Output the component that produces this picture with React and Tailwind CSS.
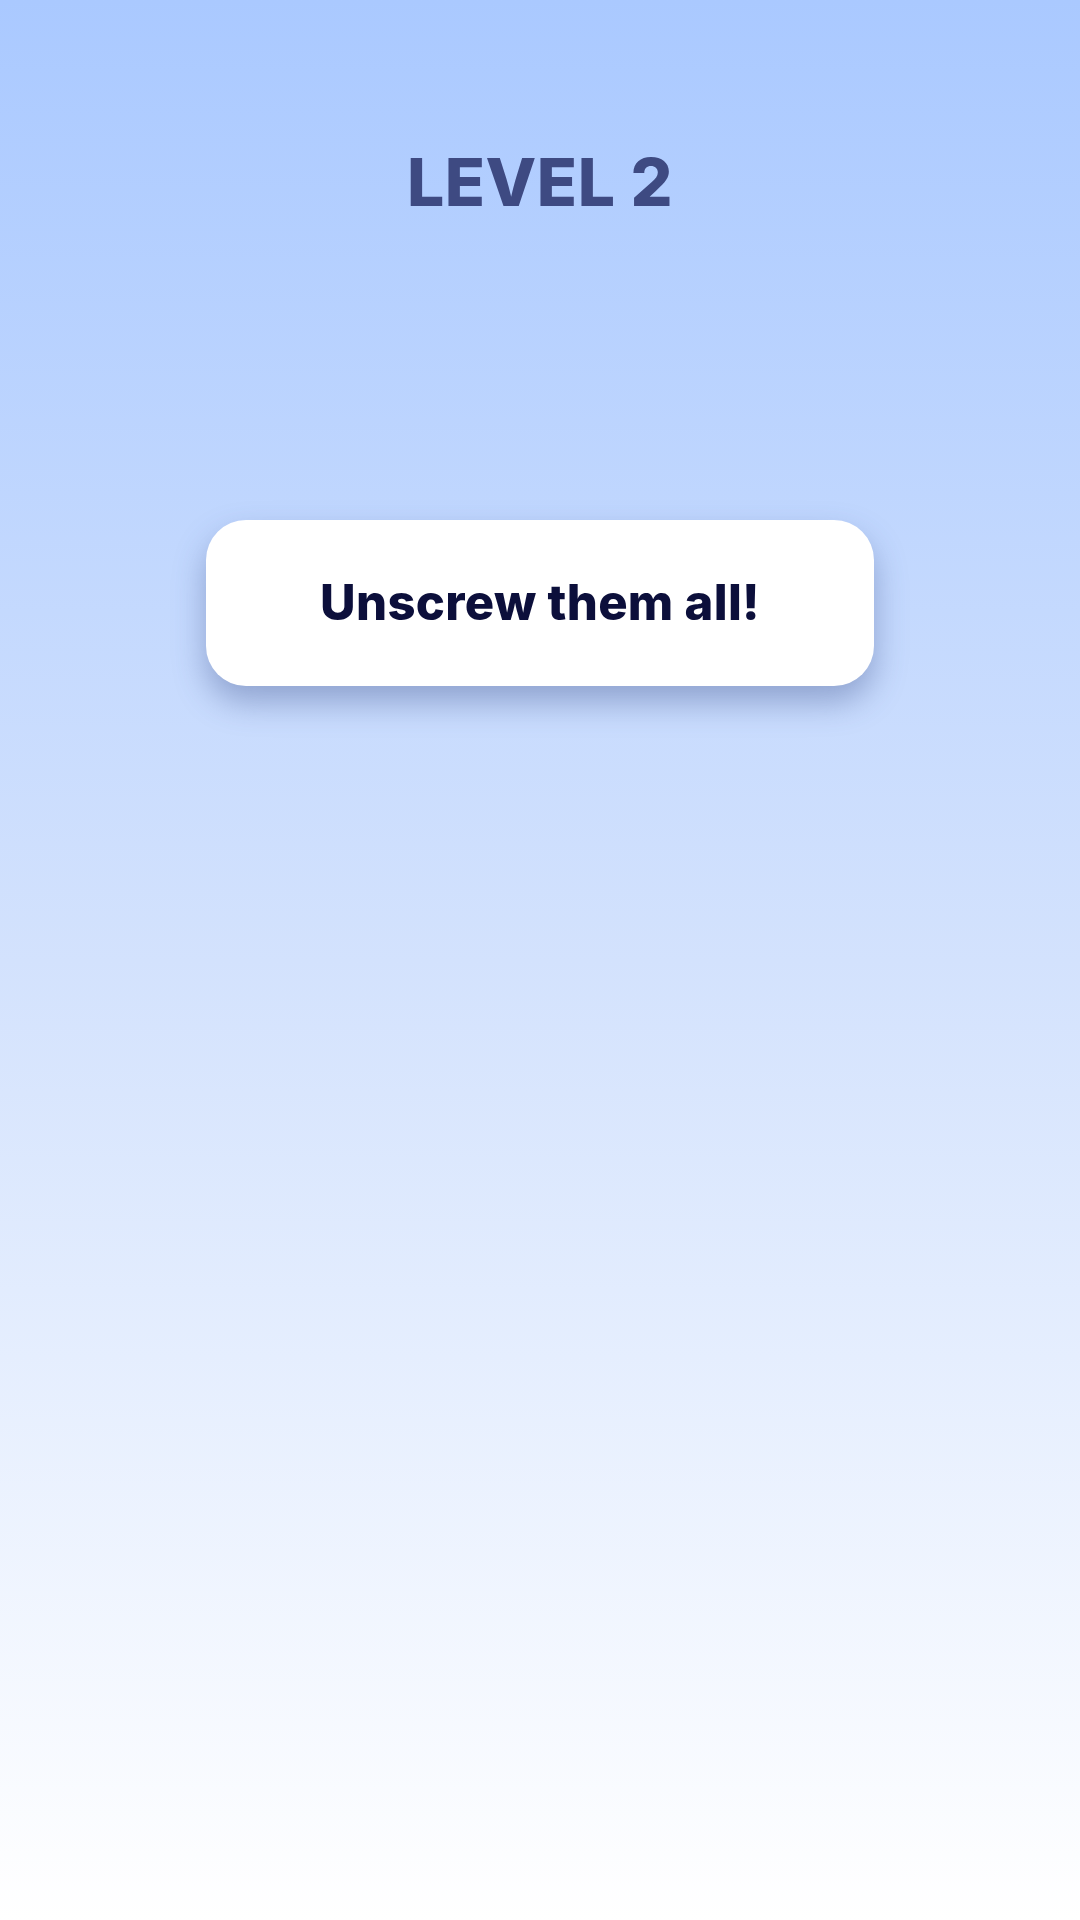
export default function App() {
  return (
    <div className="w-[1080px] h-[1920px] bg-gradient-to-b from-[#aac9ff] via-[#d3e2fd] to-[#ffffff] flex flex-col items-center" style={{ fontFamily: "Inter, 'Noto Sans', sans-serif" }}>
      <h1 className="mt-[146px] text-[66px] leading-[72px] font-extrabold text-[#3e4a82] tracking-[0.5px]">LEVEL 2</h1>
      <div className="mt-[302px] w-[668px] h-[166px] bg-white rounded-[40px] shadow-[0_16px_32px_rgba(60,80,140,0.4)] flex items-center justify-center">
        <span className="text-[49px] leading-[56px] font-extrabold text-[#0c0f3b] tracking-[0.3px]">Unscrew them all!</span>
      </div>
    </div>
  );
}
